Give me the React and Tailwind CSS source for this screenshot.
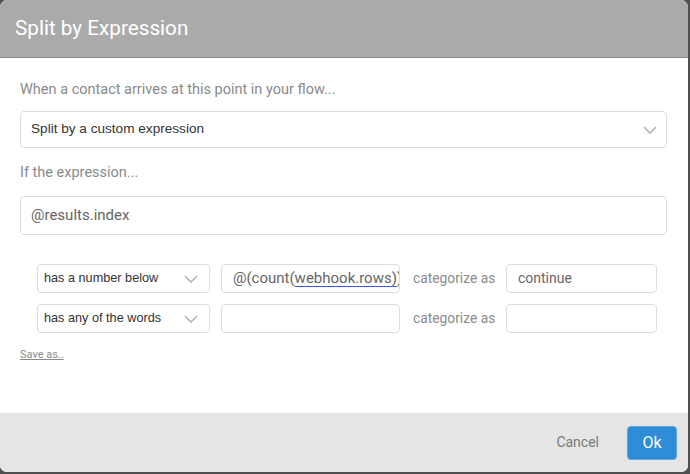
import React from "react";

const Chevron = ({ className = "" }) => (
  <svg width="14" height="8" viewBox="0 0 14 8" className={className}>
    <polyline points="1,1 7,7 13,1" fill="none" stroke="#b3b3b3" strokeWidth="1.6" />
  </svg>
);

const roboto = "font-['Roboto','Liberation_Sans',sans-serif]";
const arial = "font-['Liberation_Sans','Arial',sans-serif]";

export default function App() {
  return (
    <div className="w-[690px] h-[474px] bg-[#4f4f4f]">
      <div className="w-[688px] h-[472px] bg-white rounded-[7px] overflow-hidden flex flex-col">
        <div className={`h-[58px] bg-[#aaaaaa] border-b border-[#8c8c8c] flex items-center px-[15px] text-white text-[20.7px] ${roboto}`}>
          Split by Expression
        </div>
        <div className="flex-1 px-[20px] flex flex-col">
          <div className={`mt-[22px] h-[20px] leading-[20px] text-[14.5px] text-[#8a8a8a] ${roboto}`}>
            When a contact arrives at this point in your flow...
          </div>
          <div className="mt-[11px] h-[37px] w-[647px] border border-[#dddddd] rounded-[4px] flex items-center justify-between pl-[10px] pr-[9px]">
            <span className={`text-[13.6px] text-[#333333] ${arial}`}>Split by a custom expression</span>
            <Chevron />
          </div>
          <div className={`mt-[15px] h-[20px] leading-[20px] text-[14.5px] text-[#8a8a8a] ${roboto}`}>
            If the expression...
          </div>
          <div className={`mt-[13px] h-[39px] w-[647px] border border-[#dddddd] rounded-[4px] flex items-center pl-[10px] text-[15px] text-[#666666] ${roboto}`}>
            @results.index
          </div>
          <div className="mt-[29px] pl-[17px] flex flex-col gap-[11px]">
            <div className="flex items-center h-[29px]">
              <div className="w-[173px] h-[29px] border border-[#dddddd] rounded-[4px] flex items-center justify-between pl-[6px] pr-[11px]">
                <span className={`text-[12.7px] text-[#333333] ${arial}`}>has a number below</span>
                <Chevron />
              </div>
              <div className={`ml-[11px] w-[179px] h-[29px] border border-[#dddddd] rounded-[4px] flex items-center pl-[11px] overflow-hidden whitespace-nowrap text-[15px] text-[#666666] ${roboto}`}>
                @(count(<span className="underline decoration-[#3b5bdb] underline-offset-[3px]">webhook.rows)</span>)
              </div>
              <div className={`ml-[13px] w-[93px] text-[13.8px] text-[#8a8a8a] ${roboto}`}>categorize as</div>
              <div className={`w-[151px] h-[29px] border border-[#dddddd] rounded-[4px] flex items-center pl-[11px] text-[14px] text-[#666666] ${roboto}`}>
                continue
              </div>
            </div>
            <div className="flex items-center h-[29px]">
              <div className="w-[173px] h-[29px] border border-[#dddddd] rounded-[4px] flex items-center justify-between pl-[6px] pr-[11px]">
                <span className={`text-[12.7px] text-[#333333] ${arial}`}>has any of the words</span>
                <Chevron />
              </div>
              <div className="ml-[11px] w-[179px] h-[29px] border border-[#dddddd] rounded-[4px]" />
              <div className={`ml-[13px] w-[93px] text-[13.8px] text-[#8a8a8a] ${roboto}`}>categorize as</div>
              <div className="w-[151px] h-[29px] border border-[#dddddd] rounded-[4px]" />
            </div>
          </div>
          <div className={`mt-[15px] text-[11px] leading-[14px] text-[#8a8a8a] underline ${roboto}`}>Save as..</div>
        </div>
        <div className="h-[59px] bg-[#e5e5e5] flex items-center justify-end pr-[11px]">
          <span className={`text-[14px] text-[#7a7a7a] mr-[28px] ${roboto}`}>Cancel</span>
          <div className={`w-[50px] h-[34px] bg-[#2f8cd7] border border-[#5aa6e0] rounded-[4px] flex items-center justify-center text-white text-[16px] ${roboto}`}>
            Ok
          </div>
        </div>
      </div>
    </div>
  );
}
